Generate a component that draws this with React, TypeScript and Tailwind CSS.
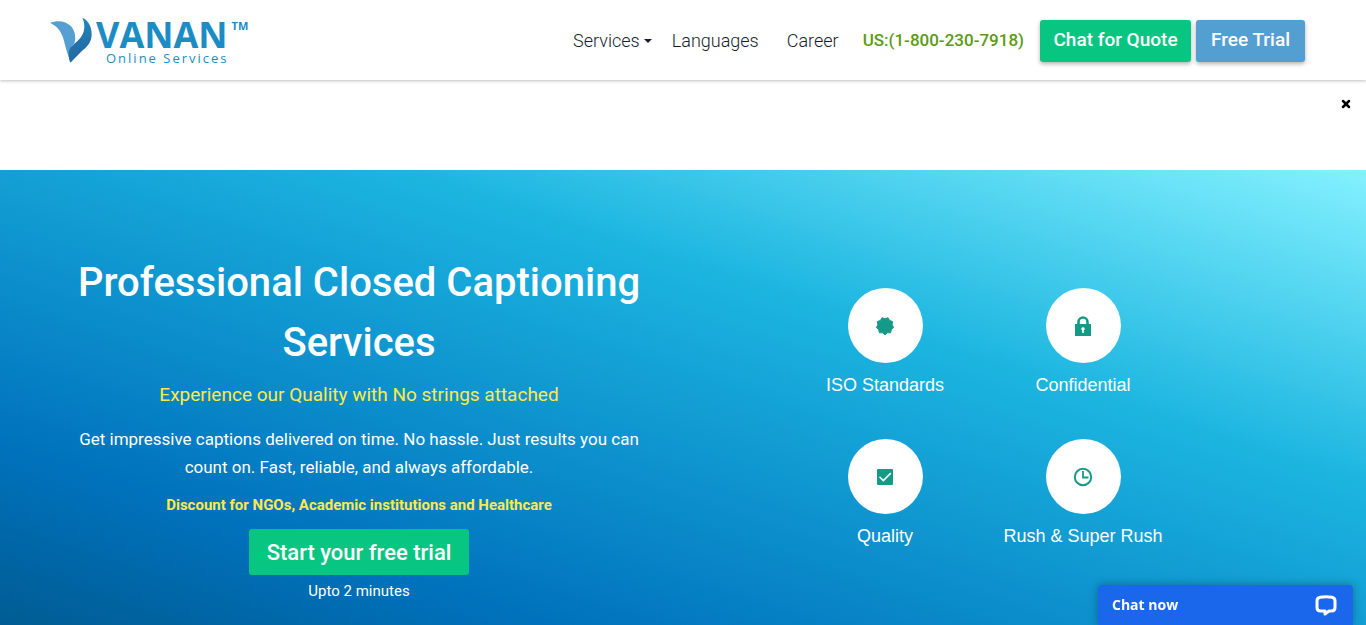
import React from "react";
import { X } from "lucide-react";

const NAV_LINK = "text-lg font-light text-[#161c2d] hover:text-[#0d8bc4]";

export default function App() {
  return (
    <div className="flex min-h-screen flex-col bg-white font-['Roboto',sans-serif]">
      <Header />
      <NoticeBar />
      <Hero />
      <ChatWidget />
    </div>
  );
}

const Header = () => {
  return (
    <header className="relative flex h-20 items-center justify-between bg-white pt-px pr-[61px] pl-[50px] shadow-[0_1px_3px_rgba(0,0,0,0.25)]">
      <Logo />
      <nav className="flex items-center">
        <button type="button" className={`${NAV_LINK} flex items-center gap-1`}>
          Services
          <svg viewBox="0 0 8 4" className="w-2" fill="currentColor" aria-hidden="true">
            <path d="M0 0h8L4 4z" />
          </svg>
        </button>
        <a href="#languages" className={`${NAV_LINK} ml-5`}>Languages</a>
        <a href="#career" className={`${NAV_LINK} ml-7`}>Career</a>
        <a href="tel:18002307918" className="ml-6 text-[17px] font-medium text-[#5b9a13]">US:(1-800-230-7918)</a>
        <button type="button" className="ml-4 h-[42px] w-[151px] rounded-[3px] bg-[#08c681] text-[19px] font-medium text-white shadow-[0_2px_4px_rgba(0,0,0,0.3)]">
          Chat for Quote
        </button>
        <button type="button" className="ml-[5px] h-[42px] w-[109px] rounded-[3px] bg-[#539fd1] text-[19px] font-medium text-white shadow-[0_2px_4px_rgba(0,0,0,0.3)]">
          Free Trial
        </button>
      </nav>
    </header>
  );
};

const Logo = () => {
  return (
    <a href="#home" className="flex items-center gap-1 font-['Open_Sans',sans-serif] text-[#1b8cc4]">
      <svg viewBox="17 15 126 135" className="h-[45px] w-[42px]" aria-hidden="true">
        <defs>
          <linearGradient id="wing" x1="0" y1="0" x2="0" y2="1">
            <stop offset="0" stopColor="#1f88bd" />
            <stop offset="0.55" stopColor="#2272a9" />
            <stop offset="1" stopColor="#236aa1" />
          </linearGradient>
        </defs>
        <path d="M17 30C38 20 66 24 80 40C92 54 96 72 90 92C82 98 76 106 76 125L77 145L66 110C58 80 54 45 17 30Z" fill="#559fd3" />
        <path d="M114 15C130 20 142 40 142 62C142 85 132 98 115 112L78 149C73 135 71 116 76 108C84 92 108 84 118 56C122 40 120 26 114 15Z" fill="url(#wing)" />
      </svg>
      <span className="flex flex-col">
        <span className="flex items-start">
          <span className="text-[36px] leading-[34px] font-bold">VANAN</span>
          <span className="ml-1 pt-[2px] text-[11px] leading-3 font-bold">TM</span>
        </span>
        <span className="pl-[10px] text-[13px] leading-3 tracking-[2px]">Online Services</span>
      </span>
    </a>
  );
};

const NoticeBar = () => {
  return (
    <div className="flex h-[90px] items-start justify-end bg-white pt-[18px] pr-[14px]">
      <button type="button" aria-label="Close" className="text-black">
        <X size={12} strokeWidth={5} />
      </button>
    </div>
  );
};

const Hero = () => {
  return (
    <section className="grid flex-1 grid-cols-2 items-start gap-[30px] bg-[linear-gradient(18deg,#005c93_0%,#0072bd_20%,#1cb5e0_65%,#84f1ff_100%)] px-[50px] text-center text-white">
      <div className="flex flex-col items-center px-2 pt-[83px] pb-5">
        <h1 className="text-[40px] leading-[60px] font-medium">Professional Closed Captioning Services</h1>
        <p className="mt-2 text-[19px] leading-7 text-[#ffe94a]">Experience our Quality with No strings attached</p>
        <p className="mt-4 text-[17px] leading-7">
          Get impressive captions delivered on time. No hassle. Just results you can count on. Fast, reliable, and always affordable.
        </p>
        <p className="mt-3 text-[15px] leading-6 font-bold text-[#ffe94a]">Discount for NGOs, Academic institutions and Healthcare</p>
        <button type="button" className="mt-3 h-[46px] w-[220px] rounded-[3px] bg-[#08c681] text-[22px] font-medium">
          Start your free trial
        </button>
        <p className="mt-1 text-[15px] leading-6">Upto 2 minutes</p>
      </div>

      <ul className="grid grid-cols-[198px_198px] justify-center gap-y-[42px] pt-[118px] pr-[46px] font-['Liberation_Sans',Arial,sans-serif]">
        {features.map((feature) => (
          <li key={feature.label} className="flex flex-col items-center gap-[10px]">
            <span className="flex h-[75px] w-[75px] items-center justify-center rounded-full bg-white text-[#159a88]">
              <svg viewBox="0 0 20 20" className="h-5 w-5" aria-hidden="true">
                {feature.icon}
              </svg>
            </span>
            <span className="text-lg leading-6">{feature.label}</span>
          </li>
        ))}
      </ul>
    </section>
  );
};

// nine point seal, one point facing down
const sealPoints = Array.from({ length: 18 }, (_, i) => {
  const angle = Math.PI / 2 + (i * Math.PI) / 9;
  const r = i % 2 === 0 ? 8.8 : 7.2;
  return `${(10 + r * Math.cos(angle)).toFixed(2)},${(10 + r * Math.sin(angle)).toFixed(2)}`;
}).join(" ");

const features = [
  {
    label: "ISO Standards",
    icon: <polygon points={sealPoints} fill="currentColor" stroke="currentColor" strokeLinejoin="round" />,
  },
  {
    label: "Confidential",
    icon: (
      <>
        <path d="M5.5 9V6a4.5 4.5 0 0 1 9 0v3" fill="none" stroke="currentColor" strokeWidth="2.6" />
        <path d="M2 8h16v12H2z" fill="currentColor" />
        <path d="M10 11.2a1.7 1.7 0 0 1 .8 3.2V17H9.2v-2.6a1.7 1.7 0 0 1 .8-3.2z" fill="#fff" />
      </>
    ),
  },
  {
    label: "Quality",
    icon: (
      <>
        <rect x="2" y="2" width="16" height="16" rx="1" fill="currentColor" />
        <path d="M4.5 9.8l3.8 3.8 7.5-7.5" fill="none" stroke="#fff" strokeWidth="1.5" />
      </>
    ),
  },
  {
    label: "Rush & Super Rush",
    icon: (
      <g fill="none" stroke="currentColor" strokeWidth="2">
        <circle cx="10" cy="10" r="8.2" />
        <path d="M10 4v6.5h5.5" strokeWidth="1.8" />
      </g>
    ),
  },
];

const ChatWidget = () => {
  return (
    <button
      type="button"
      className="fixed right-[13px] bottom-0 flex h-10 w-[255px] items-center justify-between rounded-t bg-[#1b67eb] pr-4 pl-[14px] font-['Open_Sans',sans-serif] text-sm font-bold text-white shadow-[0_0_10px_rgba(0,0,0,0.3)]"
    >
      Chat now
      <svg viewBox="0 0 22 21" className="h-[21px] w-[22px]" fill="none" stroke="currentColor" strokeWidth="3" strokeLinejoin="round" aria-hidden="true">
        <path d="M5 2.3Q11 1.3 17 2.3Q20 3 20 6V12.5Q20 16 16.5 16H14L10 19V16H5.5Q2 16 2 12.5V6Q2 3 5 2.3Z" />
      </svg>
    </button>
  );
};
